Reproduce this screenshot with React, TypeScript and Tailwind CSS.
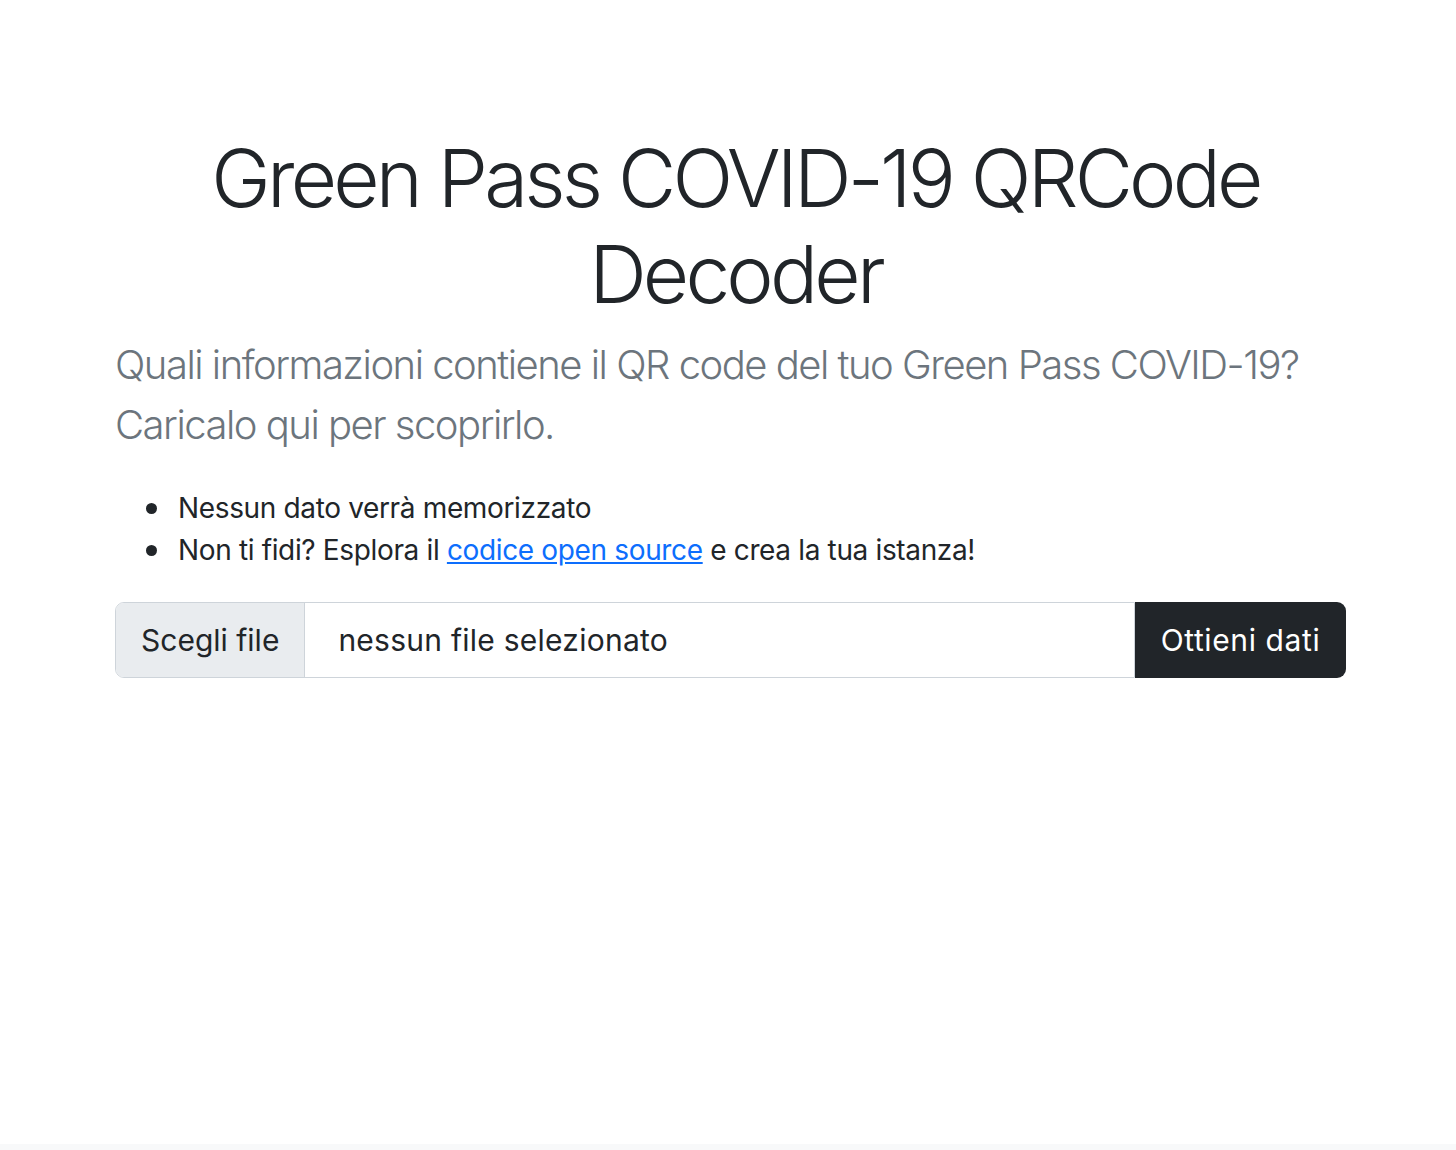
export default function App() {
  return (
    <div className="min-h-[1150px] flex flex-col bg-white text-[#212529] font-['Inter','Liberation_Sans',sans-serif]">
      <main className="flex-1">
        <div className="w-[1231px] ml-[115px] pt-[130px]">
          <h1 className="text-center pl-[10px] text-[80px] leading-[96px] font-light tracking-[-3.8px] mb-[13px]">
            Green Pass COVID-19 QRCode Decoder
          </h1>
          <p className="text-[40px] leading-[60px] font-light text-[#6c757d] tracking-[-1.5px] mb-[32px]">
            Quali informazioni contiene il QR code del tuo Green Pass COVID-19? Caricalo qui per scoprirlo.
          </p>
          <ul className="pl-[31px] text-[28px] leading-[42px] tracking-[-0.35px] mb-[31px]">
            <li className="flex items-center">
              <span className="w-[11px] h-[11px] rounded-full bg-[#212529] mr-[21px] shrink-0" />
              <span>Nessun dato verrà memorizzato</span>
            </li>
            <li className="flex items-center">
              <span className="w-[11px] h-[11px] rounded-full bg-[#212529] mr-[21px] shrink-0" />
              <span>
                Non ti fidi? Esplora il{' '}
                <a href="#" className="text-[#0d6efd] underline">
                  codice open source
                </a>{' '}
                e crea la tua istanza!
              </span>
            </li>
          </ul>
          <form className="flex h-[76px] text-[30px]">
            <label className="flex-1 flex items-stretch border border-[#ced4da] rounded-l-[9px] overflow-hidden">
              <span className="flex items-center px-[25px] bg-[#e9ecef] border-r border-[#ced4da]">Scegli file</span>
              <span className="flex items-center pl-[33px] tracking-[0.25px]">nessun file selezionato</span>
            </label>
            <button
              type="button"
              className="w-[211px] bg-[#212529] text-white rounded-r-[9px] flex items-center justify-center tracking-[0.6px]"
            >
              Ottieni dati
            </button>
          </form>
        </div>
      </main>
      <footer className="h-[6px] bg-[#f8f9fa]" />
    </div>
  );
}
